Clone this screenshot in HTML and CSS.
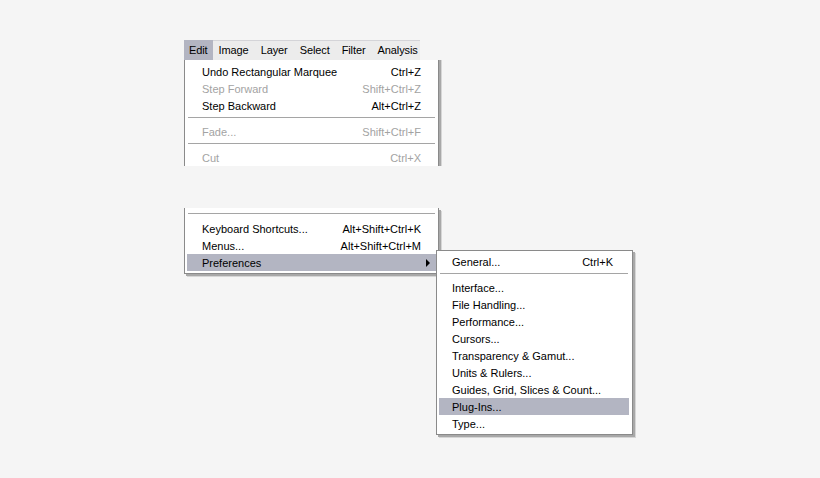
FILE: index.html
```html
<!DOCTYPE html>
<html>
<head>
<meta charset="utf-8">
<link rel="stylesheet" href="styles.css">
</head>
<body>
<div class="stage">
  <div class="menubar">
    <span class="mb-item active">Edit</span>
    <span class="mb-item">Image</span>
    <span class="mb-item">Layer</span>
    <span class="mb-item">Select</span>
    <span class="mb-item">Filter</span>
    <span class="mb-item">Analysis</span>
  </div>
  <div class="dropdown">
    <div class="part part-top">
      <div class="row"><span>Undo Rectangular Marquee</span><span>Ctrl+Z</span></div>
      <div class="row disabled"><span>Step Forward</span><span>Shift+Ctrl+Z</span></div>
      <div class="row"><span>Step Backward</span><span>Alt+Ctrl+Z</span></div>
      <div class="sep"></div>
      <div class="row disabled"><span>Fade...</span><span>Shift+Ctrl+F</span></div>
      <div class="sep"></div>
      <div class="row disabled cut"><span>Cut</span><span>Ctrl+X</span></div>
    </div>
    <div class="part part-bottom">
      <div class="sep sep-first"></div>
      <div class="row"><span>Keyboard Shortcuts...</span><span>Alt+Shift+Ctrl+K</span></div>
      <div class="row"><span>Menus...</span><span>Alt+Shift+Ctrl+M</span></div>
      <div class="row hl has-sub"><span>Preferences</span><span class="arrow"></span></div>
    </div>
    <div class="submenu">
      <div class="row"><span>General...</span><span>Ctrl+K</span></div>
      <div class="sep"></div>
      <div class="row"><span>Interface...</span></div>
      <div class="row"><span>File Handling...</span></div>
      <div class="row"><span>Performance...</span></div>
      <div class="row"><span>Cursors...</span></div>
      <div class="row"><span>Transparency &amp; Gamut...</span></div>
      <div class="row"><span>Units &amp; Rulers...</span></div>
      <div class="row"><span>Guides, Grid, Slices &amp; Count...</span></div>
      <div class="row hl"><span>Plug-Ins...</span></div>
      <div class="row"><span>Type...</span></div>
    </div>
  </div>
</div>
</body>
</html>
```
FILE: styles.css
```css
html, body {
  margin: 0;
  padding: 0;
  background: #f5f5f5;
}
body {
  font-family: "Liberation Sans", Arial, sans-serif;
  font-size: 11px;
  color: #000;
  width: 820px;
  height: 478px;
  overflow: hidden;
}
.stage {
  padding: 40px 0 0 184px;
}
.menubar {
  display: flex;
  width: 236px;
  height: 20px;
  background: #ececec;
  box-shadow: inset 0 1px 0 #d4d4d8;
}
.mb-item {
  padding: 0 6px;
  line-height: 21px;
  letter-spacing: -0.1px;
}
.mb-item:first-child {
  padding-left: 5px;
  padding-right: 5px;
}
.mb-item.active {
  background: #b3b5c2;
}
.dropdown {
  position: relative;
  width: 255px;
}
.part {
  background: #fff;
  border-left: 1px solid #8a8a8a;
  border-right: 1px solid #8a8a8a;
  box-shadow: 2px 0 0 #a8a8a8, 3px 0 0 #d6d6d6;
}
.part-top {
  padding: 3px 2px 0 2px;
  overflow: hidden;
  box-sizing: border-box;
  height: 106px;
}
.part-bottom {
  margin-top: 42px;
  padding: 0 2px 2px 2px;
  border-bottom: 1px solid #8a8a8a;
  box-shadow: 2px 2px 0 #a8a8a8, 3px 3px 0 #d6d6d6;
}
.row {
  display: flex;
  justify-content: space-between;
  align-items: center;
  height: 17px;
  padding: 0 15px;
  white-space: nowrap;
}
.row.disabled {
  color: #a3a3a3;
}
.row.hl {
  background: #b3b5c2;
}
.sep {
  height: 9px;
  position: relative;
}
.sep::after {
  content: "";
  position: absolute;
  left: 1px;
  right: 1px;
  top: 3px;
  height: 1px;
  background: #a5a5a5;
}
.sep-first {
  height: 12px;
}
.sep-first::after {
  top: 5px;
}
.has-sub {
  padding-right: 6px;
}
.arrow {
  width: 0;
  height: 0;
  border-top: 4px solid transparent;
  border-bottom: 4px solid transparent;
  border-left: 4px solid #000;
}
.submenu {
  position: absolute;
  left: 252px;
  top: 190px;
  width: 197px;
  box-sizing: border-box;
  background: #fff;
  border: 1px solid #8a8a8a;
  padding: 2px 3px 2px 2px;
  box-shadow: 2px 2px 0 #a8a8a8, 3px 3px 0 #d6d6d6;
}
.submenu .row {
  padding: 0 16px 0 13px;
}
```
